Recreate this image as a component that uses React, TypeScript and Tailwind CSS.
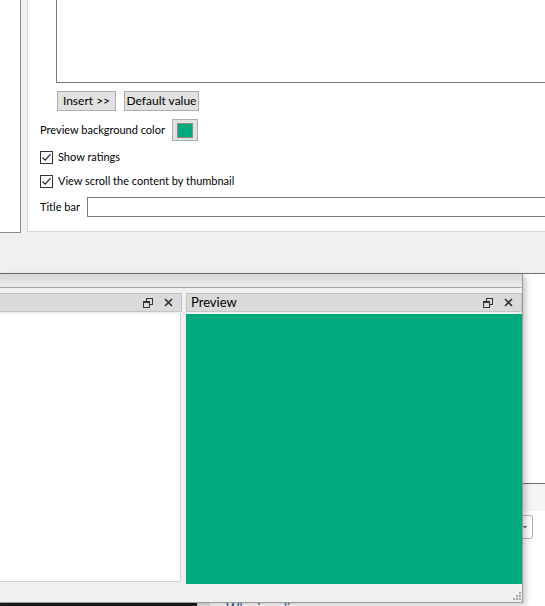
import React from "react";

function Check() {
  return (
    <div className="w-[13px] h-[13px] border border-[#333333] bg-white flex items-center justify-center shrink-0">
      <svg width="11" height="11" viewBox="0 0 11 11">
        <path d="M1.5 5.5 L4.2 8.2 L9.5 2.2" fill="none" stroke="#222" strokeWidth="1.2" />
      </svg>
    </div>
  );
}

function FloatIcon() {
  return (
    <svg width="10" height="10" viewBox="0 0 10 10" className="shrink-0">
      <rect x="3.5" y="0.5" width="6" height="6" fill="none" stroke="#333" strokeWidth="1" />
      <rect x="0.5" y="3.5" width="6" height="6" fill="#dadada" stroke="#333" strokeWidth="1" />
      <rect x="0" y="3" width="7" height="2" fill="#333" />
    </svg>
  );
}

function CloseIcon() {
  return (
    <svg width="9" height="9" viewBox="0 0 9 9" className="shrink-0">
      <path d="M1 1 L8 8 M8 1 L1 8" stroke="#333" strokeWidth="1.7" />
    </svg>
  );
}

function Grip() {
  const dots = [
    [6, 0],
    [3, 3],
    [6, 3],
    [0, 6],
    [3, 6],
    [6, 6],
  ];
  return (
    <svg width="8" height="8" viewBox="0 0 8 8">
      {dots.map(([x, y], i) => (
        <rect key={i} x={x} y={y} width="2" height="2" fill="#a8a8a8" />
      ))}
    </svg>
  );
}

export default function App() {
  return (
    <div className="w-[545px] h-[606px] overflow-hidden bg-white font-['Lato','Noto_Sans',sans-serif] text-[11px] text-black flex flex-col">
      {/* dialog */}
      <div className="h-[274px] shrink-0 bg-[#f0f0f0] border-b border-[#6f6f6f] flex flex-col">
        <div className="flex h-[232px]">
          <div className="w-[21px] h-[233px] bg-white border-r border-b border-[#8a8a8a] shrink-0" />
          <div className="ml-[6px] flex-1 bg-white border-l border-b border-[#d9d9d9] flex flex-col pl-[12px]">
            <div className="ml-[16px] h-[83px] border-l border-b border-[#7a7a7a] bg-white" />
            <div className="mt-[8px] ml-[17px] flex gap-[8px] h-[20px] text-[12px]">
              <div className="w-[59px] h-[20px] bg-[#e1e1e1] border border-[#adadad] flex items-center justify-center leading-none whitespace-nowrap">
                Insert &gt;&gt;
              </div>
              <div className="w-[75px] h-[20px] bg-[#e1e1e1] border border-[#adadad] flex items-center justify-center leading-none whitespace-nowrap">
                Default value
              </div>
            </div>
            <div className="mt-[8px] flex items-center h-[22px]">
              <div className="w-[132px] whitespace-nowrap">Preview background color</div>
              <div className="w-[26px] h-[22px] bg-[#e1e1e1] border border-[#adadad] flex items-center justify-center">
                <div className="w-[16px] h-[15px] bg-[#00a97e] border border-[#8a8a8a]" />
              </div>
            </div>
            <div className="mt-[4px] h-[24px] flex items-center">
              <Check />
              <span className="ml-[5px]">Show ratings</span>
            </div>
            <div className="h-[24px] flex items-center">
              <Check />
              <span className="ml-[5px]">View scroll the content by thumbnail</span>
            </div>
            <div className="mt-[4px] h-[20px] flex items-center">
              <div className="w-[47px] whitespace-nowrap">Title bar</div>
              <div className="flex-1 h-[20px] bg-white border-l border-t border-b border-[#7a7a7a]" />
            </div>
          </div>
        </div>
      </div>

      {/* middle */}
      <div className="h-[329px] shrink-0 flex">
        <div className="relative z-10 w-[523px] shrink-0 bg-[#f0f0f0] border-r border-b border-[#9c9c9c] shadow-[3px_2px_6px_rgba(0,0,0,0.22)] flex flex-col">
          <div className="h-[14px] bg-gradient-to-b from-[#d6d6d6] to-[#ececec] border-b border-[#a9a9a9]" />
          <div className="pt-[5px] flex gap-[4px]">
            <div className="w-[182px] flex flex-col">
              <div className="h-[19px] bg-[#dadada] border-t border-r border-b border-[#c4c4c4] flex items-center justify-end gap-[11px] pr-[8px]">
                <FloatIcon />
                <CloseIcon />
              </div>
              <div className="mt-[2px] w-[181px] h-[268px] bg-white border-r border-b border-[#d4d4d4]" />
            </div>
            <div className="w-[336px] flex flex-col">
              <div className="h-[19px] bg-[#dadada] border border-[#c4c4c4] flex items-center pl-[4px] pr-[8px]">
                <span className="text-[13px] leading-none flex-1">Preview</span>
                <div className="flex items-center gap-[11px]">
                  <FloatIcon />
                  <CloseIcon />
                </div>
              </div>
              <div className="mt-[2px] h-[270px] bg-[#00a97e]" />
            </div>
          </div>
          <div className="flex-1 flex justify-end items-end pr-[1px] pb-[2px]">
            <Grip />
          </div>
        </div>
        <div className="flex-1 flex flex-col bg-white">
          <div className="h-[210px] bg-white border-b border-[#6d6d6d]" />
          <div className="h-[27px] bg-[#f5f5f5]" />
          <div className="pt-[4px]">
            <div className="w-[10px] h-[24px] border border-l-0 border-[#b3b3b3] rounded-r-[3px] flex items-center">
              <svg width="4" height="4" viewBox="0 0 4 4">
                <path d="M0 1 L4 1 L2 3.5 Z" fill="#4a5a70" />
              </svg>
            </div>
          </div>
        </div>
      </div>

      {/* bottom strip */}
      <div className="h-[3px] shrink-0 flex">
        <div className="w-[197px] bg-[#1c1c1c]" />
        <div className="w-[13px] bg-[#e4e4e4]" />
        <div className="flex-1 bg-white overflow-hidden pl-[16px]">
          <div className="text-[13px] leading-[13px] -mt-[1px] text-[#2a5aa8] whitespace-nowrap">Who is online</div>
        </div>
      </div>
    </div>
  );
}
